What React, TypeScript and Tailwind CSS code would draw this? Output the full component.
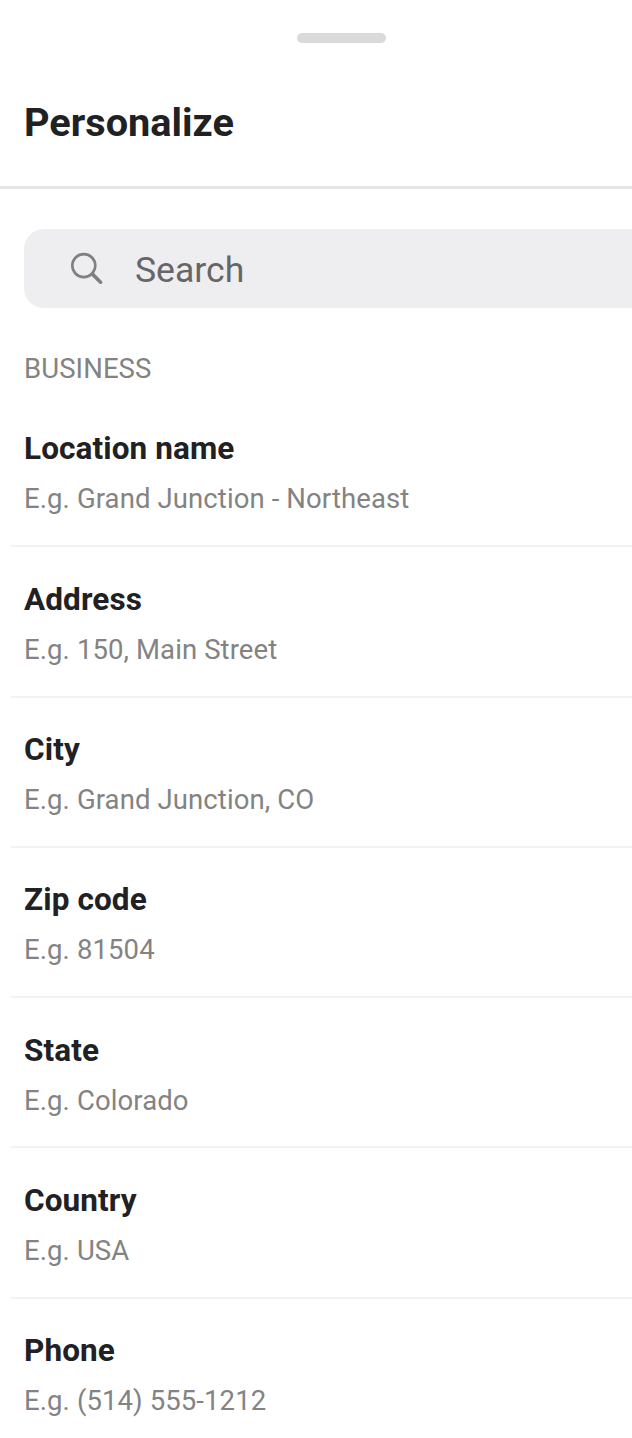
type Field = { label: string; example: string };

const FIELDS: Field[] = [
  { label: "Location name", example: "Grand Junction - Northeast" },
  { label: "Address", example: "150, Main Street" },
  { label: "City", example: "Grand Junction, CO" },
  { label: "Zip code", example: "81504" },
  { label: "State", example: "Colorado" },
  { label: "Country", example: "USA" },
  { label: "Phone", example: "(514) 555-1212" },
];

function SearchIcon() {
  return (
    <svg width="34" height="34" viewBox="0 0 34 34" fill="none" className="shrink-0 text-[#808084]">
      <circle cx="13.8" cy="13.6" r="11.5" stroke="currentColor" strokeWidth="2.6" />
      <path d="M22.2 21.9L30.6 30.2" stroke="currentColor" strokeWidth="3.6" strokeLinecap="round" />
    </svg>
  );
}

function FieldRow({ label, example }: Field) {
  return (
    <li className="ml-[11px] h-[150.3px] shrink-0 border-b-2 border-[#f2f2f2] pl-[13px] pt-[32.4px]">
      <p className="text-[31.5px] font-bold leading-[40px] tracking-[0.1px] text-[#212123]">{label}</p>
      <p className="mt-3 text-[27.5px] leading-[36px] tracking-[0.1px] text-[#838383]">E.g. {example}</p>
    </li>
  );
}

export default function App() {
  return (
    <div className="flex h-[1438px] w-[632px] flex-col overflow-hidden bg-white font-['Roboto',sans-serif]">
      <div className="ml-[297px] mt-[33px] h-[10px] w-[89px] shrink-0 rounded-full bg-[#dadada]" />
      <header className="flex h-[146px] shrink-0 items-center border-b-3 border-[#e5e5e5] pl-6 pt-[17px]">
        <h1 className="text-[39.7px] font-bold text-[#212123]">Personalize</h1>
      </header>
      <div className="ml-6 mt-10 flex h-[79px] shrink-0 items-center rounded-l-[20px] bg-[#eeeef0] pl-[46px]">
        <SearchIcon />
        <span className="ml-[31px] mt-[5px] text-[35.6px] text-[#666668]">Search</span>
      </div>
      <h2 className="ml-6 mt-[43px] shrink-0 text-[27.5px] leading-[36px] tracking-[0.1px] text-[#838383]">
        BUSINESS
      </h2>
      <ul className="mt-[10px] flex flex-col">
        {FIELDS.map((field) => (
          <FieldRow key={field.label} {...field} />
        ))}
      </ul>
    </div>
  );
}
